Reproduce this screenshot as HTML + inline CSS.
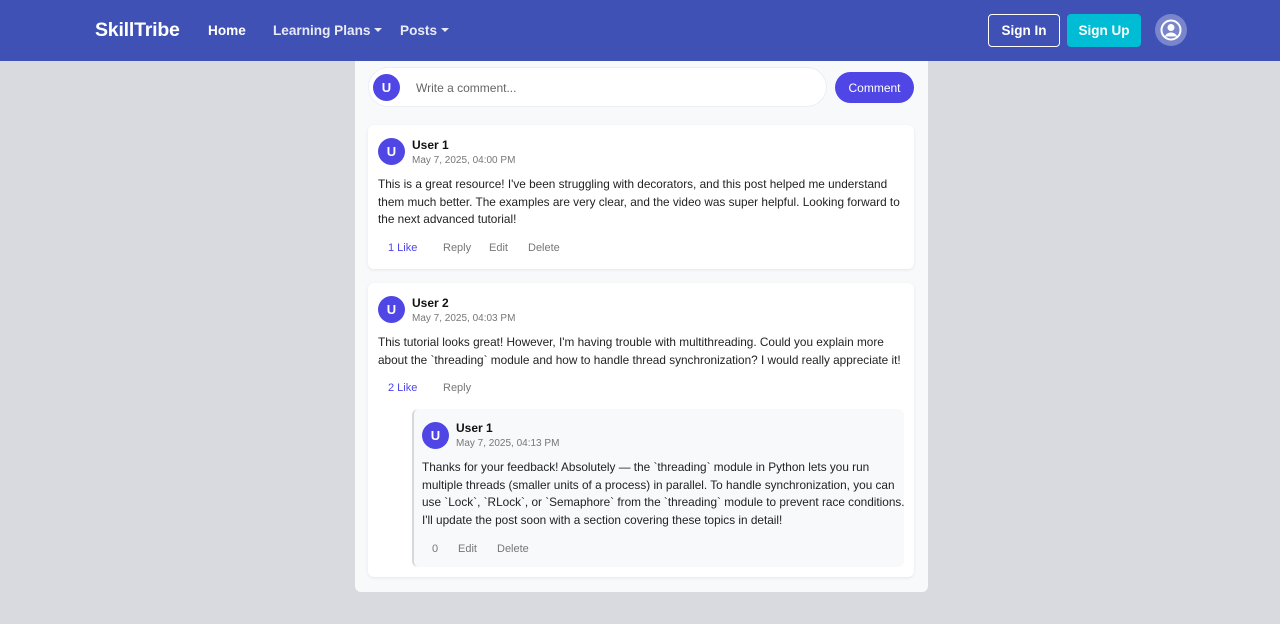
<!DOCTYPE html>
<html><head><meta charset="utf-8"><style>
*{box-sizing:border-box;margin:0;padding:0}
body{width:1280px;height:624px;overflow:hidden;background:#d9dadf;font-family:"Liberation Sans",sans-serif;position:relative;color:#222}
.nav{position:absolute;left:0;top:0;width:1280px;height:61px;background:#3f51b5;color:#fff;z-index:2}
.abs{position:absolute}
.brand{left:95px;top:19px;font-size:19.5px;font-weight:bold;letter-spacing:-0.2px}
.nl{top:23px;font-size:13.6px;font-weight:bold;color:#e8eaf6}
.caret{display:inline-block;border-left:4px solid transparent;border-right:4px solid transparent;border-top:4px solid #e8eaf6;vertical-align:3px;margin-left:4px}
.btn{top:14px;height:33px;border-radius:4px;font-size:13.5px;font-weight:bold;display:flex;align-items:center;justify-content:center}
.wrap{left:355px;top:40px;width:573px;height:552px;background:#f8f9fb;border-radius:6px}
.av{width:27px;height:27px;border-radius:50%;background:#4f46e5;color:#fff;font-weight:bold;font-size:13px;display:flex;align-items:center;justify-content:center}
.card{background:#fff;border-radius:6px;box-shadow:0 1px 3px rgba(0,0,0,.08)}
.name{font-size:12px;font-weight:bold;color:#111}
.date{font-size:10px;color:#777}
.txt{font-size:11.8px;line-height:17.5px;color:#222;white-space:nowrap}
.act{font-size:11px;color:#777}
.like{color:#4f46e5}
</style></head><body>
<div class="nav">
<div class="abs brand">SkillTribe</div>
<div class="abs nl" style="left:208px;color:#fff">Home</div>
<div class="abs nl" style="left:273px">Learning Plans<span class="caret"></span></div>
<div class="abs nl" style="left:400px">Posts<span class="caret"></span></div>
<div class="abs btn" style="left:988px;width:72px;border:1.5px solid #fff">Sign In</div>
<div class="abs btn" style="left:1067px;width:74px;background:#00bcd4">Sign Up</div>
<div class="abs" style="left:1155px;top:14px;width:32px;height:32px;border-radius:50%;background:#7986cb">
<svg width="32" height="32" viewBox="0 0 32 32"><circle cx="16" cy="16" r="9.5" fill="none" stroke="#fff" stroke-width="2"/><circle cx="16" cy="13.5" r="3.5" fill="#fff"/><path d="M9.5 22.5c2-3 4-4 6.5-4s4.5 1 6.5 4" fill="#fff"/></svg></div>
</div>
<div class="abs wrap"></div>
<div class="abs" style="left:368px;top:67px;width:459px;height:40px;border-radius:20px;background:#fff;border:1px solid #eceef2"></div>
<div class="abs av" style="left:373px;top:74px">U</div>
<div class="abs" style="left:416px;top:81px;font-size:12px;color:#666">Write a comment...</div>
<div class="abs" style="left:835px;top:72px;width:79px;height:31px;border-radius:16px;background:#4f46e5;color:#fff;font-size:12px;display:flex;align-items:center;justify-content:center">Comment</div>

<div class="abs card" style="left:368px;top:125px;width:546px;height:144px"></div>
<div class="abs av" style="left:378px;top:138px">U</div>
<div class="abs name" style="left:412px;top:138px">User 1</div>
<div class="abs date" style="left:412px;top:155px">May 7, 2025, 04:00 PM</div>
<div class="abs txt" style="left:378px;top:176px">This is a great resource! I've been struggling with decorators, and this post helped me understand<br>them much better. The examples are very clear, and the video was super helpful. Looking forward to<br>the next advanced tutorial!</div>
<div class="abs act like" style="left:388px;top:242px">1 Like</div>
<div class="abs act" style="left:443px;top:242px">Reply</div>
<div class="abs act" style="left:489px;top:242px">Edit</div>
<div class="abs act" style="left:528px;top:242px">Delete</div>

<div class="abs card" style="left:368px;top:283px;width:546px;height:294px"></div>
<div class="abs av" style="left:378px;top:296px">U</div>
<div class="abs name" style="left:412px;top:296px">User 2</div>
<div class="abs date" style="left:412px;top:313px">May 7, 2025, 04:03 PM</div>
<div class="abs txt" style="left:378px;top:334px">This tutorial looks great! However, I'm having trouble with multithreading. Could you explain more<br>about the `threading` module and how to handle thread synchronization? I would really appreciate it!</div>
<div class="abs act like" style="left:388px;top:382px">2 Like</div>
<div class="abs act" style="left:443px;top:382px">Reply</div>

<div class="abs" style="left:412px;top:409px;width:492px;height:158px;background:#f8f9fa;border-left:2px solid #d6d8dc;border-radius:6px"></div>
<div class="abs av" style="left:422px;top:422px">U</div>
<div class="abs name" style="left:456px;top:421px">User 1</div>
<div class="abs date" style="left:456px;top:438px">May 7, 2025, 04:13 PM</div>
<div class="abs txt" style="left:422px;top:459px">Thanks for your feedback! Absolutely — the `threading` module in Python lets you run<br>multiple threads (smaller units of a process) in parallel. To handle synchronization, you can<br>use `Lock`, `RLock`, or `Semaphore` from the `threading` module to prevent race conditions.<br>I'll update the post soon with a section covering these topics in detail!</div>
<div class="abs act" style="left:432px;top:543px">0</div>
<div class="abs act" style="left:458px;top:543px">Edit</div>
<div class="abs act" style="left:497px;top:543px">Delete</div>
</body></html>
